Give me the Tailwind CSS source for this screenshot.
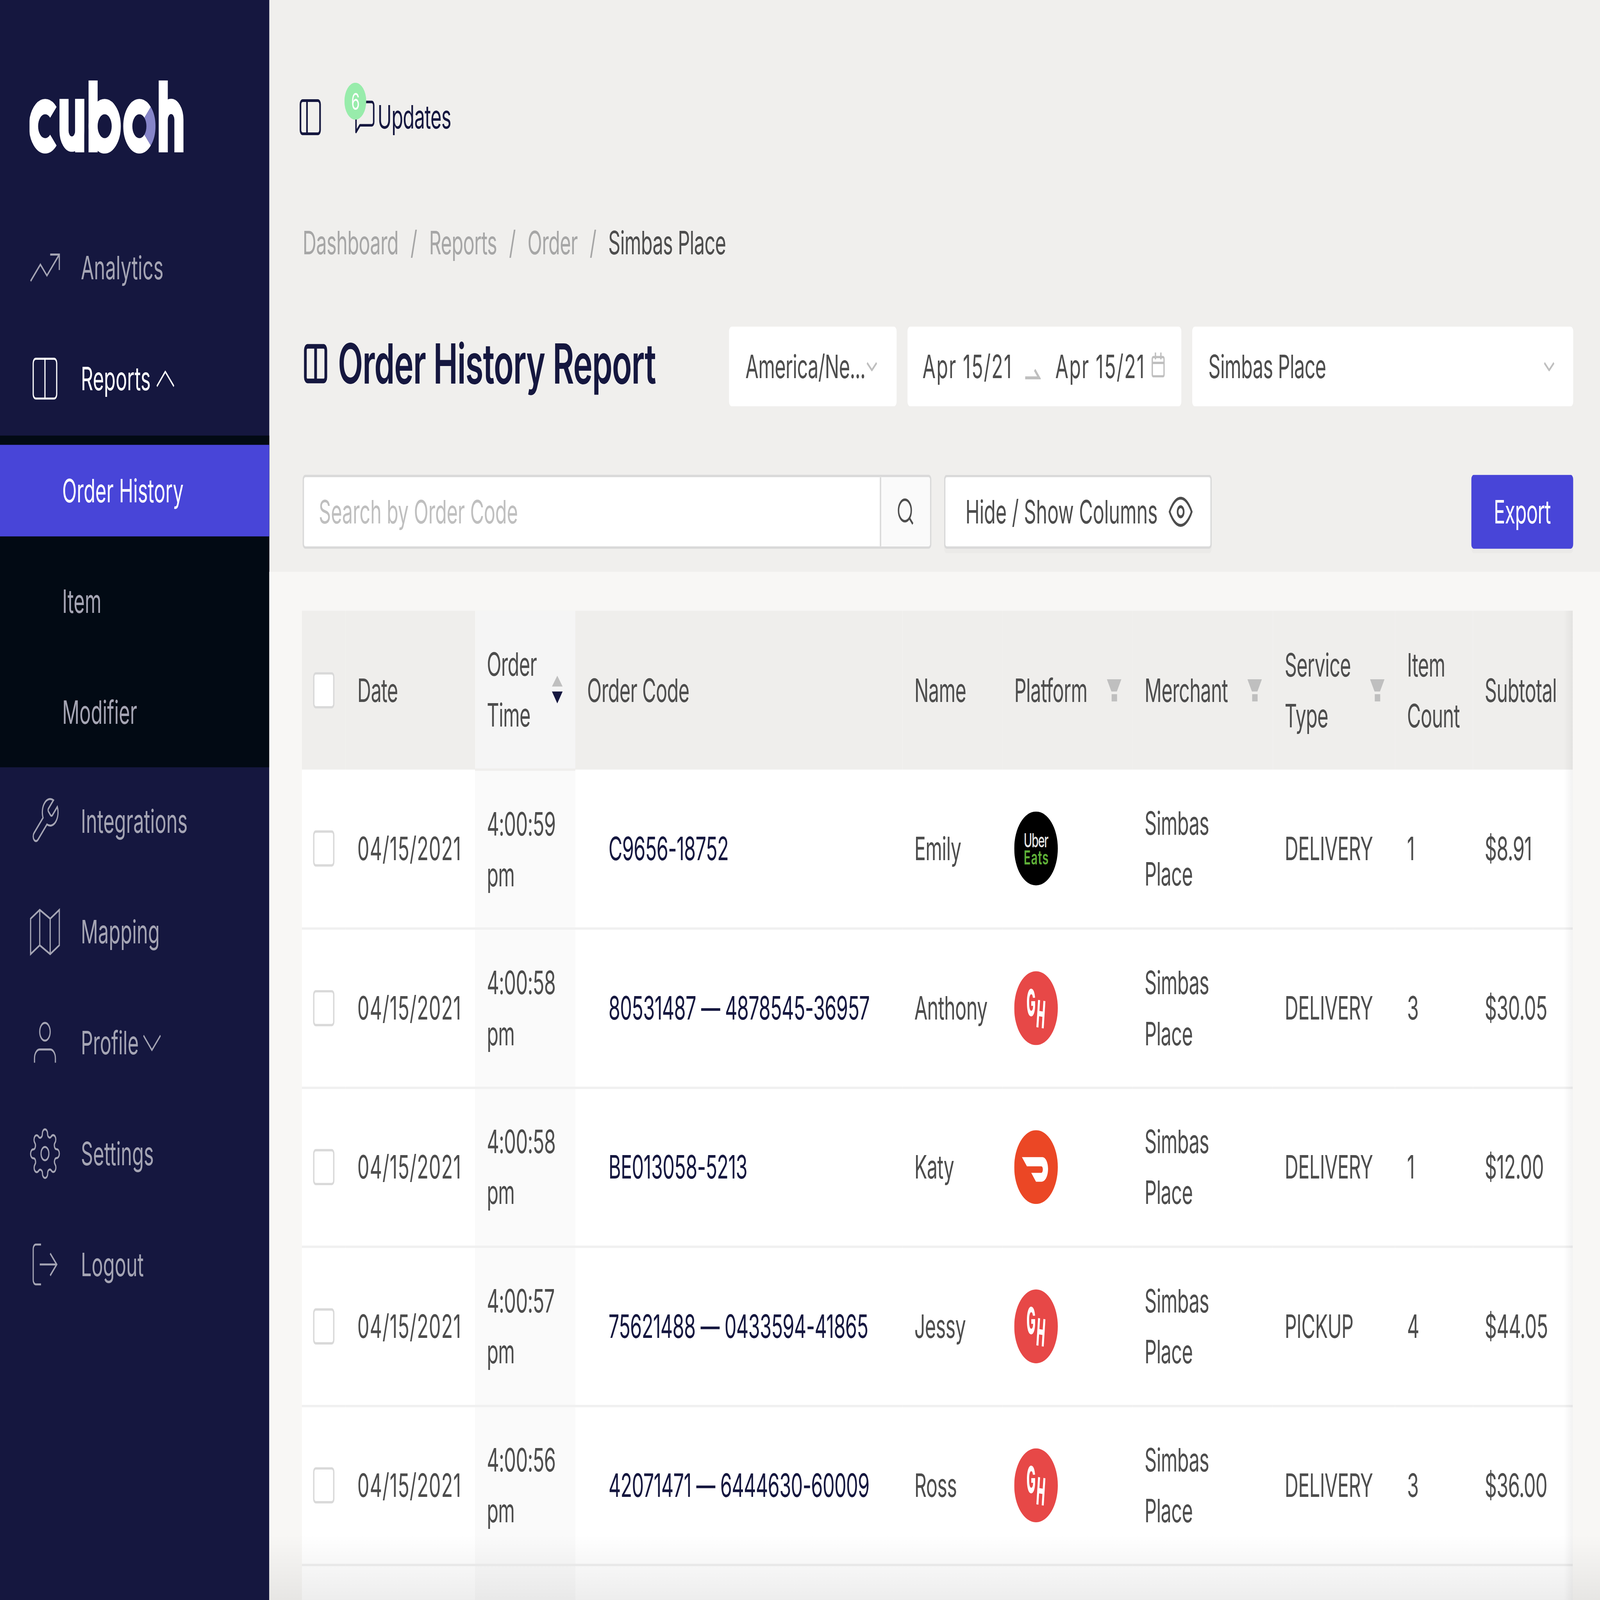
<!DOCTYPE html>
<html lang="en">

<head>
    <meta charset="UTF-8">
    <meta name="viewport" content="width=device-width, initial-scale=1.0">
    <title>Order History Report</title>
    <script src="https://cdn.jsdelivr.net/npm/@tailwindcss/browser@4"></script>
</head>

<body class="bg-[#f0efed] overflow-hidden">
    <!-- the browser caps the window below the page size, so the fixed-size page is fitted to the window at load (no-op at full size) -->
    <div class="w-screen h-screen overflow-hidden">
    <div id="page" class="flex w-[7047px] h-[4158px] overflow-hidden origin-top-left font-['Inter',sans-serif] text-[84px] leading-[132px] tracking-[-0.015em] text-[#4d4d4d]">

        <!-- sidebar -->
        <aside class="w-[1186px] h-full shrink-0 bg-[#15173f] text-[#a5a5b4] tracking-normal">
            <div class="h-[552px] pt-[205px] pl-[130px]">
                <svg class="w-[680px] h-[196px]" viewBox="130 205 680 196" fill="none" stroke="#fff" stroke-width="40" aria-label="cuboh">
                    <path d="M235 292a51 51 0 1 0 0 72" />
                    <path d="M282 257v83a34.500 34.500 0 0 0 69 0v-83" />
                    <path d="M351 257v139" />
                    <path d="M410 209v187" />
                    <circle cx="461" cy="328" r="51" />
                    <path d="M650 292a51 51 0 1 0 0 72" />
                    <path d="M650 292a51 51 0 0 1 0 72" stroke="#8685c9" />
                    <path d="M719 209v187M719 311a34.500 34.500 0 0 1 69 0v85" />
                </svg>
            </div>
            <nav>
                <a class="flex items-center h-[288px] pl-[129px]">
                    <svg class="w-[138px] h-[138px]" viewBox="0 0 24 24" fill="none" stroke="currentColor" stroke-width="0.9"><polyline points="23 6 13.500 15.500 8.500 10.500 1 18" /><polyline points="16 6 23 6 23 13" /></svg>
                    <span class="ml-[89px]">Analytics</span>
                </a>
                <a class="flex items-center h-[288px] pl-[129px] text-white">
                    <svg class="w-[138px] h-[138px]" viewBox="0 0 24 24" fill="none" stroke="currentColor" stroke-width="0.9"><path d="M12 3h7a2 2 0 0 1 2 2v14a2 2 0 0 1-2 2h-7m0-18H5a2 2 0 0 0-2 2v14a2 2 0 0 0 2 2h7m0-18v18" /></svg>
                    <span class="ml-[89px]">Reports</span>
                    <svg class="w-[77px] h-[43px] ml-[26px]" viewBox="0 0 77 43" fill="none" stroke="currentColor" stroke-width="5"><polyline points="1 41 38 3 76 41" /></svg>
                </a>
                <div class="h-[862px] mt-[4px] pt-[24px] bg-[#020a14]">
                    <a class="flex items-center h-[238px] pl-[274px] bg-[#4845d8] text-white">Order History</a>
                    <a class="flex items-center h-[238px] mt-[50px] pl-[274px]">Item</a>
                    <a class="flex items-center h-[238px] mt-[50px] pl-[274px]">Modifier</a>
                </div>
                <a class="flex items-center h-[288px] -mt-[4px] pl-[129px]">
                    <svg class="w-[138px] h-[138px]" viewBox="0 0 24 24" fill="none" stroke="currentColor" stroke-width="0.9"><path d="M14.700 6.300a1 1 0 0 0 0 1.400l1.600 1.600a1 1 0 0 0 1.400 0l3.770-3.770a6 6 0 0 1-7.940 7.940l-6.910 6.910a2.120 2.120 0 0 1-3-3l6.910-6.910a6 6 0 0 1 7.940-7.940l-3.760 3.760z" /></svg>
                    <span class="ml-[89px]">Integrations</span>
                </a>
                <a class="flex items-center h-[288px] pl-[129px]">
                    <svg class="w-[138px] h-[138px]" viewBox="0 0 24 24" fill="none" stroke="currentColor" stroke-width="0.9"><polygon points="1 6 1 22 8 18 16 22 23 18 23 2 16 6 8 2 1 6" /><line x1="8" y1="2" x2="8" y2="18" /><line x1="16" y1="6" x2="16" y2="22" /></svg>
                    <span class="ml-[89px]">Mapping</span>
                </a>
                <a class="flex items-center h-[288px] pl-[129px]">
                    <svg class="w-[138px] h-[138px]" viewBox="0 0 24 24" fill="none" stroke="currentColor" stroke-width="0.9"><path d="M20 21v-2a4 4 0 0 0-4-4H8a4 4 0 0 0-4 4v2" /><circle cx="12" cy="7" r="4" /></svg>
                    <span class="ml-[89px]">Profile</span>
                    <svg class="w-[77px] h-[43px] ml-[20px]" viewBox="0 0 77 43" fill="none" stroke="currentColor" stroke-width="5"><polyline points="1 2 38 40 76 2" /></svg>
                </a>
                <a class="flex items-center h-[288px] pl-[129px]">
                    <svg class="w-[138px] h-[138px]" viewBox="0 0 24 24" fill="none" stroke="currentColor" stroke-width="0.9"><circle cx="12" cy="12" r="3" /><path d="M19.400 15a1.650 1.650 0 0 0 .33 1.820l.06.06a2 2 0 0 1 0 2.830 2 2 0 0 1-2.830 0l-.06-.06a1.650 1.650 0 0 0-1.820-.33 1.650 1.650 0 0 0-1 1.510V21a2 2 0 0 1-2 2 2 2 0 0 1-2-2v-.09A1.650 1.650 0 0 0 9 19.400a1.650 1.650 0 0 0-1.820.33l-.06.06a2 2 0 0 1-2.830 0 2 2 0 0 1 0-2.830l.06-.06a1.650 1.650 0 0 0 .33-1.820 1.650 1.650 0 0 0-1.510-1H3a2 2 0 0 1-2-2 2 2 0 0 1 2-2h.09A1.650 1.650 0 0 0 4.600 9a1.650 1.650 0 0 0-.33-1.820l-.06-.06a2 2 0 0 1 0-2.830 2 2 0 0 1 2.830 0l.06.06a1.650 1.650 0 0 0 1.820.33H9a1.650 1.650 0 0 0 1-1.510V3a2 2 0 0 1 2-2 2 2 0 0 1 2 2v.09a1.650 1.650 0 0 0 1 1.510 1.650 1.650 0 0 0 1.820-.33l.06-.06a2 2 0 0 1 2.830 0 2 2 0 0 1 0 2.830l-.06.06a1.650 1.650 0 0 0-.33 1.820V9a1.650 1.650 0 0 0 1.510 1H21a2 2 0 0 1 2 2 2 2 0 0 1-2 2h-.09a1.650 1.650 0 0 0-1.510 1z" /></svg>
                    <span class="ml-[89px]">Settings</span>
                </a>
                <a class="flex items-center h-[288px] pl-[129px]">
                    <svg class="w-[138px] h-[138px]" viewBox="0 0 24 24" fill="none" stroke="currentColor" stroke-width="0.9"><path d="M9 21H5a2 2 0 0 1-2-2V5a2 2 0 0 1 2-2h4" /><polyline points="16 17 21 12 16 7" /><line x1="21" y1="12" x2="8" y2="12" /></svg>
                    <span class="ml-[89px]">Logout</span>
                </a>
            </nav>
        </aside>

        <!-- main -->
        <main class="relative flex-1 min-w-0 h-full">
            <div class="h-[1486px] pt-[208px] pl-[147px] pr-[118px]">
                <div class="flex items-center h-[192px]">
                    <svg class="w-[115px] h-[115px] -ml-[24px]" viewBox="0 0 24 24" fill="none" stroke="#15173f" stroke-width="1.500" stroke-linecap="round" stroke-linejoin="round">
                        <rect x="3" y="3" width="18" height="18" rx="2" /><line x1="9" y1="3" x2="9" y2="21" />
                    </svg>
                    <div class="relative flex items-center ml-[131px] text-[#15173f]">
                        <span class="absolute -left-[38px] -top-[23px] flex items-center justify-center w-[96px] h-[96px] rounded-full bg-[#98ecab] text-white text-[60px] leading-none">6</span>
                        <svg class="w-[104px] h-[104px]" viewBox="0 0 24 24" fill="none" stroke="#15173f" stroke-width="1.500" stroke-linejoin="round">
                            <path d="M21 15a2 2 0 0 1-2 2H7l-4 4V5a2 2 0 0 1 2-2h14a2 2 0 0 1 2 2z" />
                        </svg>
                        <span class="ml-[4px]">Updates</span>
                    </div>
                </div>

                <div class="flex items-center h-[132px] mt-[165px] text-[#a6a6a6]">
                    <span>Dashboard</span><span class="mx-[53px]">/</span>
                    <span>Reports</span><span class="mx-[53px]">/</span>
                    <span>Order</span><span class="mx-[53px]">/</span>
                    <span class="text-[#4d4d4d]">Simbas Place</span>
                </div>

                <div class="flex items-center h-[207px] mt-[152px]">
                    <div class="flex items-center pb-[16px] text-[#15173f]">
                        <svg class="w-[120px] h-[120px] shrink-0 -ml-[3px]" viewBox="0 0 24 24" fill="none" stroke="#15173f" stroke-width="2.400" stroke-linejoin="round"><path d="M12 3h7a2 2 0 0 1 2 2v14a2 2 0 0 1-2 2h-7m0-18H5a2 2 0 0 0-2 2v14a2 2 0 0 0 2 2h7m0-18v18" /></svg>
                        <h1 class="ml-[38px] whitespace-nowrap text-[144px] leading-[180px] font-semibold tracking-[-0.014em]">Order History Report</h1>
                    </div>
                    <div class="ml-auto flex gap-[48px]">
                        <div class="flex items-center w-[738px] h-[207px] pl-[72px] pr-[86px] bg-white rounded-[12px]">
                            <span>America/Ne...</span>
                            <svg class="w-[46px] h-[25px] ml-auto shrink-0" viewBox="0 0 46 25" fill="none" stroke="#bfbfbf" stroke-width="6"><polyline points="2 3 23 22 44 3" /></svg>
                        </div>
                        <div class="flex items-center w-[1206px] h-[207px] pl-[66px] bg-white rounded-[12px]">
                            <span class="w-[390px] shrink-0 whitespace-nowrap tracking-[0.04em]">Apr 15/21</span>
                            <svg class="w-[69px] h-[27px] ml-[62px] mt-[40px] shrink-0" viewBox="0 0 69 27" fill="none" stroke="#bfbfbf" stroke-width="8"><polyline points="0 23 62 23 42 2" /></svg>
                            <span class="w-[391px] ml-[64px] shrink-0 whitespace-nowrap tracking-[0.04em]">Apr 15/21</span>
                            <svg class="w-[58px] h-[65px] ml-[33px] -mt-[8px] shrink-0" viewBox="0 0 58 65" fill="none" stroke="#bfbfbf" stroke-width="6"><rect x="3" y="12" width="52" height="50" rx="5" /><line x1="3" y1="27" x2="55" y2="27" /><line x1="17" y1="0" x2="17" y2="18" /><line x1="41" y1="0" x2="41" y2="18" /></svg>
                        </div>
                        <div class="flex items-center w-[1678px] h-[207px] pl-[71px] pr-[83px] bg-white rounded-[12px]">
                            <span>Simbas Place</span>
                            <svg class="w-[46px] h-[25px] ml-auto" viewBox="0 0 46 25" fill="none" stroke="#bfbfbf" stroke-width="6"><polyline points="2 3 23 22 44 3" /></svg>
                        </div>
                    </div>
                </div>

                <div class="flex h-[192px] mt-[178px]">
                    <div class="flex w-[2769px] border-[6px] border-[#d9d9d9] rounded-[12px] bg-white overflow-hidden">
                        <input class="flex-1 min-w-0 pl-[65px] outline-none tracking-[-0.005em] placeholder:text-[#bfbfbf]" placeholder="Search by Order Code">
                        <div class="flex items-center justify-center w-[221px] border-l-[6px] border-[#d9d9d9] bg-[#fafafa]">
                            <svg class="w-[84px] h-[84px]" viewBox="0 0 24 24" fill="none" stroke="#4d4d4d" stroke-width="1.800"><circle cx="11" cy="11" r="8" /><line x1="21" y1="21" x2="16.650" y2="16.650" /></svg>
                        </div>
                    </div>
                    <button class="flex items-center w-[1179px] ml-[56px] pl-[88px] border-[6px] border-[#d9d9d9] rounded-[12px] bg-white shadow-[0_12px_0_rgba(0,0,0,0.02)]">
                        <span class="whitespace-nowrap tracking-[-0.005em]">Hide / Show Columns</span>
                        <svg class="w-[106px] h-[106px] ml-auto mr-[78px]" viewBox="0 0 24 24" fill="none" stroke="#4d4d4d" stroke-width="1.700"><path d="M1 12s4-8 11-8 11 8 11 8-4 8-11 8-11-8-11-8z" /><circle cx="12" cy="12" r="3" /></svg>
                    </button>
                    <button class="w-[449px] ml-auto rounded-[12px] bg-[#4845d8] text-white shadow-[0_12px_0_rgba(0,0,0,0.02)]">Export</button>
                </div>
            </div>

            <!-- report table -->
            <div class="relative h-[2672px] pt-[101px] pl-[144px] pr-[120px] bg-[#f8f7f5]">
                <table class="table-fixed w-[5597px] bg-white">
                    <colgroup>
                        <col class="w-[192px]"><col class="w-[570px]"><col class="w-[442px]"><col class="w-[1441px]"><col class="w-[440px]"><col class="w-[574px]"><col class="w-[617px]"><col class="w-[539px]"><col class="w-[342px]"><col class="w-[440px]">
                    </colgroup>
                    <thead>
                        <tr class="h-[413px] bg-[#efeeec] text-left">
                            <th class="pl-[49px] font-normal"><span class="block w-[94px] h-[94px] rounded-[12px] border-[6px] border-[#d9d9d9] bg-white"></span></th>
                            <th class="px-[52px] font-normal">Date</th>
                            <th class="pl-[52px] pr-[56px] font-normal bg-[#f5f5f5] border-b-[6px] border-[#efeeec]">
                                <div class="flex items-center justify-between">
                                    <span>Order<br>Time</span>
                                    <svg class="w-[47px] h-[72px]" viewBox="0 0 47 72"><polygon points="23.500 0 47 28 0 28" fill="#bfbfbf" /><polygon points="0 41 47 41 23.500 72" fill="#15173f" /></svg>
                                </div>
                            </th>
                            <th class="px-[52px] font-normal">Order Code</th>
                            <th class="px-[52px] font-normal">Name</th>
                            <th class="pl-[52px] pr-[50px] font-normal"><div class="flex items-center justify-between"><span>Platform</span><svg class="w-[64px] h-[58px]" viewBox="0 0 64 58" fill="#bfbfbf"><polygon points="0 0 64 0 44 32 20 32" /><rect x="21" y="39" width="24" height="19" /></svg></div></th>
                            <th class="pl-[52px] pr-[48px] font-normal"><div class="flex items-center justify-between"><span>Merchant</span><svg class="w-[64px] h-[58px]" viewBox="0 0 64 58" fill="#bfbfbf"><polygon points="0 0 64 0 44 32 20 32" /><rect x="21" y="39" width="24" height="19" /></svg></div></th>
                            <th class="pl-[52px] pr-[47px] font-normal"><div class="flex items-center justify-between"><span>Service<br>Type</span><svg class="w-[64px] h-[58px]" viewBox="0 0 64 58" fill="#bfbfbf"><polygon points="0 0 64 0 44 32 20 32" /><rect x="21" y="39" width="24" height="19" /></svg></div></th>
                            <th class="px-[52px] font-normal">Item<br>Count</th>
                            <th class="pl-[52px] font-normal">Subtotal</th>
                        </tr>
                    </thead>
                    <tbody id="rows"></tbody>
                </table>
                <div class="absolute top-[101px] bottom-0 right-[120px] w-[40px] bg-linear-to-r from-transparent to-black/5"></div>
            </div>

            <div class="absolute inset-x-0 bottom-0 h-[170px] bg-linear-to-b from-transparent to-black/[0.07]"></div>
        </main>
    </div>
    </div>

    <script>
        const logos = {
            uber: `<svg class="w-[192px] h-[192px]" viewBox="0 0 192 192"><circle cx="96" cy="96" r="96" fill="#000" /><text x="42" y="93" font-size="50" font-weight="500" fill="#e4e4e4" textLength="108">Uber</text><text x="42" y="137" font-size="50" font-weight="600" fill="#5fb038" textLength="108">Eats</text></svg>`,
            gh: `<svg class="w-[192px] h-[192px]" viewBox="0 0 192 192"><circle cx="96" cy="96" r="96" fill="#e74847" /><text transform="translate(54 116) scale(.56 1)" font-size="96" font-weight="800" fill="#fff">G</text><text transform="translate(95 145) rotate(6) scale(.52 1)" font-size="98" font-weight="800" fill="#fff">H</text></svg>`,
            doordash: `<svg class="w-[192px] h-[192px]" viewBox="0 0 192 192"><circle cx="96" cy="96" r="96" fill="#eb4725" /><path fill="#fff" d="M34 70H124C139 70 149 85 149 100C149 120 136 134 120 134H96L75 111H119C123 111 126 107 126 102C126 97 123 94 119 94H56Z" /></svg>`
        };

        const orders = [
            { time: "4:00:59", code: "C9656-18752", name: "Emily", logo: "uber", type: "DELIVERY", count: 1, total: "$8.91" },
            { time: "4:00:58", code: "80531487 — 4878545-36957", name: "Anthony", logo: "gh", type: "DELIVERY", count: 3, total: "$30.05" },
            { time: "4:00:58", code: "BE013058-5213", name: "Katy", logo: "doordash", type: "DELIVERY", count: 1, total: "$12.00" },
            { time: "4:00:57", code: "75621488 — 0433594-41865", name: "Jessy", logo: "gh", type: "PICKUP", count: 4, total: "$44.05" },
            { time: "4:00:56", code: "42071471 — 6444630-60009", name: "Ross", logo: "gh", type: "DELIVERY", count: 3, total: "$36.00" }
        ];

        document.getElementById("rows").innerHTML = orders.map(order => `
            <tr class="h-[413.400px] border-b-[6px] border-[#f0f0f0]">
                <td class="pl-[49px]"><span class="block w-[94px] h-[94px] rounded-[12px] border-[6px] border-[#d9d9d9] bg-white"></span></td>
                <td class="px-[52px] tracking-[0.018em]">04/15/2021</td>
                <td class="px-[52px] bg-[#fafafa]">${order.time}<br>pm</td>
                <td class="pl-[146px] text-[#15173f]">${order.code}</td>
                <td class="px-[52px]">${order.name}</td>
                <td class="pl-[52px]">${logos[order.logo]}</td>
                <td class="px-[52px]">Simbas<br>Place</td>
                <td class="px-[52px]">${order.type}</td>
                <td class="px-[52px]">${order.count}</td>
                <td class="pl-[52px]">${order.total}</td>
            </tr>
        `).join("") + `
            <tr class="h-[200px]"><td></td><td></td><td class="bg-[#fafafa]"></td><td></td><td></td><td></td><td></td><td></td><td></td><td></td></tr>
        `;

        document.getElementById("page").style.transform = `scale(${innerWidth / 7047}, ${innerHeight / 4158})`;
    </script>
</body>

</html>
